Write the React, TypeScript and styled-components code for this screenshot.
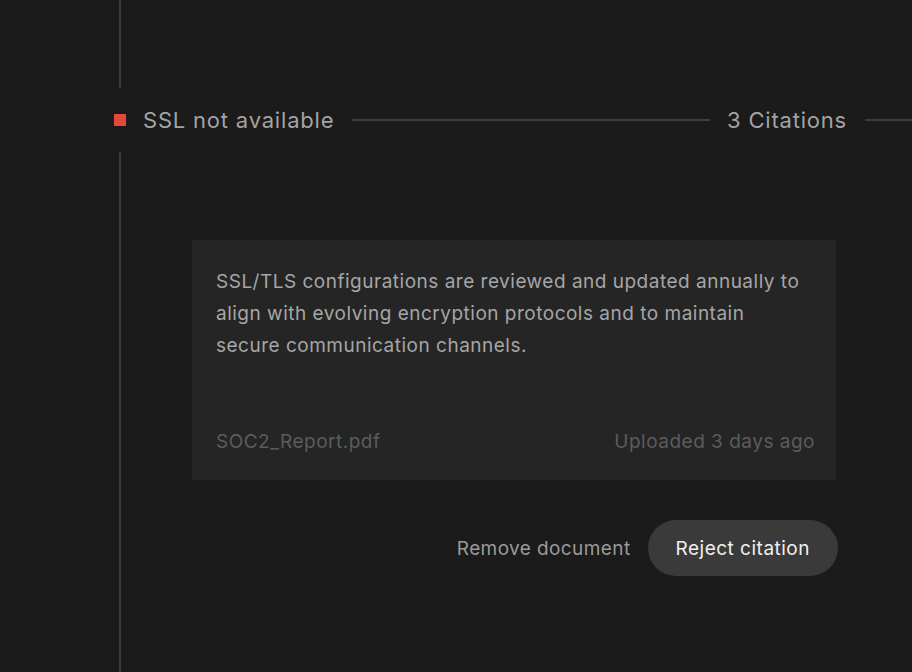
import React from "react";
import styled, { createGlobalStyle } from "styled-components";

const Global = createGlobalStyle`
  html, body { margin: 0; padding: 0; background: #1b1b1b; }
  body { font-family: Inter, "Noto Sans", sans-serif; -webkit-font-smoothing: antialiased; }
  #root { min-height: 672px; }
`;

const Page = styled.div`
  width: 912px;
  height: 672px;
  overflow: hidden;
  background: #1b1b1b;
  display: flex;
  flex-direction: column;
  padding-left: 114px;
  box-sizing: border-box;
`;

const RailSegment = styled.div<{ $h?: number }>`
  margin-left: 5px;
  border-left: 2px solid #3a3a3a;
  height: ${(p) => (p.$h ? `${p.$h}px` : "auto")};
  flex: ${(p) => (p.$h ? "0 0 auto" : "1 1 auto")};
`;

const Header = styled.div`
  height: 64px;
  display: flex;
  align-items: center;
  margin-right: -20px;
`;

const Marker = styled.span`
  width: 12px;
  height: 12px;
  background: #e5493a;
  flex: 0 0 auto;
`;

const Title = styled.span`
  margin-left: 17px;
  font-size: 22px;
  color: #a3a3a3;
  white-space: nowrap;
  letter-spacing: 0.8px;
`;

const Divider = styled.span<{ $w?: number }>`
  height: 2px;
  background: #3d3d3d;
  flex: ${(p) => (p.$w ? `0 0 ${p.$w}px` : "1 1 auto")};
  margin: 0 17px 0 18px;
`;

const Count = styled.span`
  font-size: 22px;
  color: #a3a3a3;
  white-space: nowrap;
  letter-spacing: 0.8px;
`;

const Body = styled(RailSegment)`
  padding: 88px 0 0 71px;
  display: flex;
  flex-direction: column;
  align-items: flex-start;
`;

const Card = styled.div`
  width: 644px;
  height: 240px;
  background: #252525;
  box-sizing: border-box;
  padding: 26px 21px 24px 24px;
  display: flex;
  flex-direction: column;
  justify-content: space-between;
`;

const Quote = styled.p`
  margin: 0 3px 0 0;
  font-size: 19px;
  line-height: 32px;
  color: #a6a6a6;
  letter-spacing: 0.5px;
`;

const Meta = styled.div`
  display: flex;
  justify-content: space-between;
  font-size: 19px;
  line-height: 28px;
  color: #5c5c5c;
  letter-spacing: 0.5px;
`;

const Actions = styled.div`
  width: 646px;
  margin-top: 40px;
  display: flex;
  justify-content: flex-end;
  align-items: center;
  gap: 17px;
`;

const TextButton = styled.button`
  background: none;
  border: none;
  padding: 0;
  font-family: inherit;
  font-size: 19px;
  letter-spacing: 0.4px;
  color: #9a9a9a;
  cursor: pointer;
`;

const PillButton = styled.button`
  height: 56px;
  padding: 0 28px;
  border-radius: 28px;
  border: none;
  background: #3a3a3a;
  color: #f0f0f0;
  font-family: inherit;
  font-size: 19px;
  letter-spacing: 0.5px;
  cursor: pointer;
`;

export default function App() {
  return (
    <>
      <Global />
      <Page>
        <RailSegment $h={88} />
        <Header>
          <Marker />
          <Title>SSL not available</Title>
          <Divider />
          <Count>3 Citations</Count>
          <Divider $w={50} />
        </Header>
        <Body>
          <Card>
            <Quote>
              SSL/TLS configurations are reviewed and updated annually to align with evolving
              encryption protocols and to maintain secure communication channels.
            </Quote>
            <Meta>
              <span>SOC2_Report.pdf</span>
              <span>Uploaded 3 days ago</span>
            </Meta>
          </Card>
          <Actions>
            <TextButton>Remove document</TextButton>
            <PillButton>Reject citation</PillButton>
          </Actions>
        </Body>
      </Page>
    </>
  );
}
